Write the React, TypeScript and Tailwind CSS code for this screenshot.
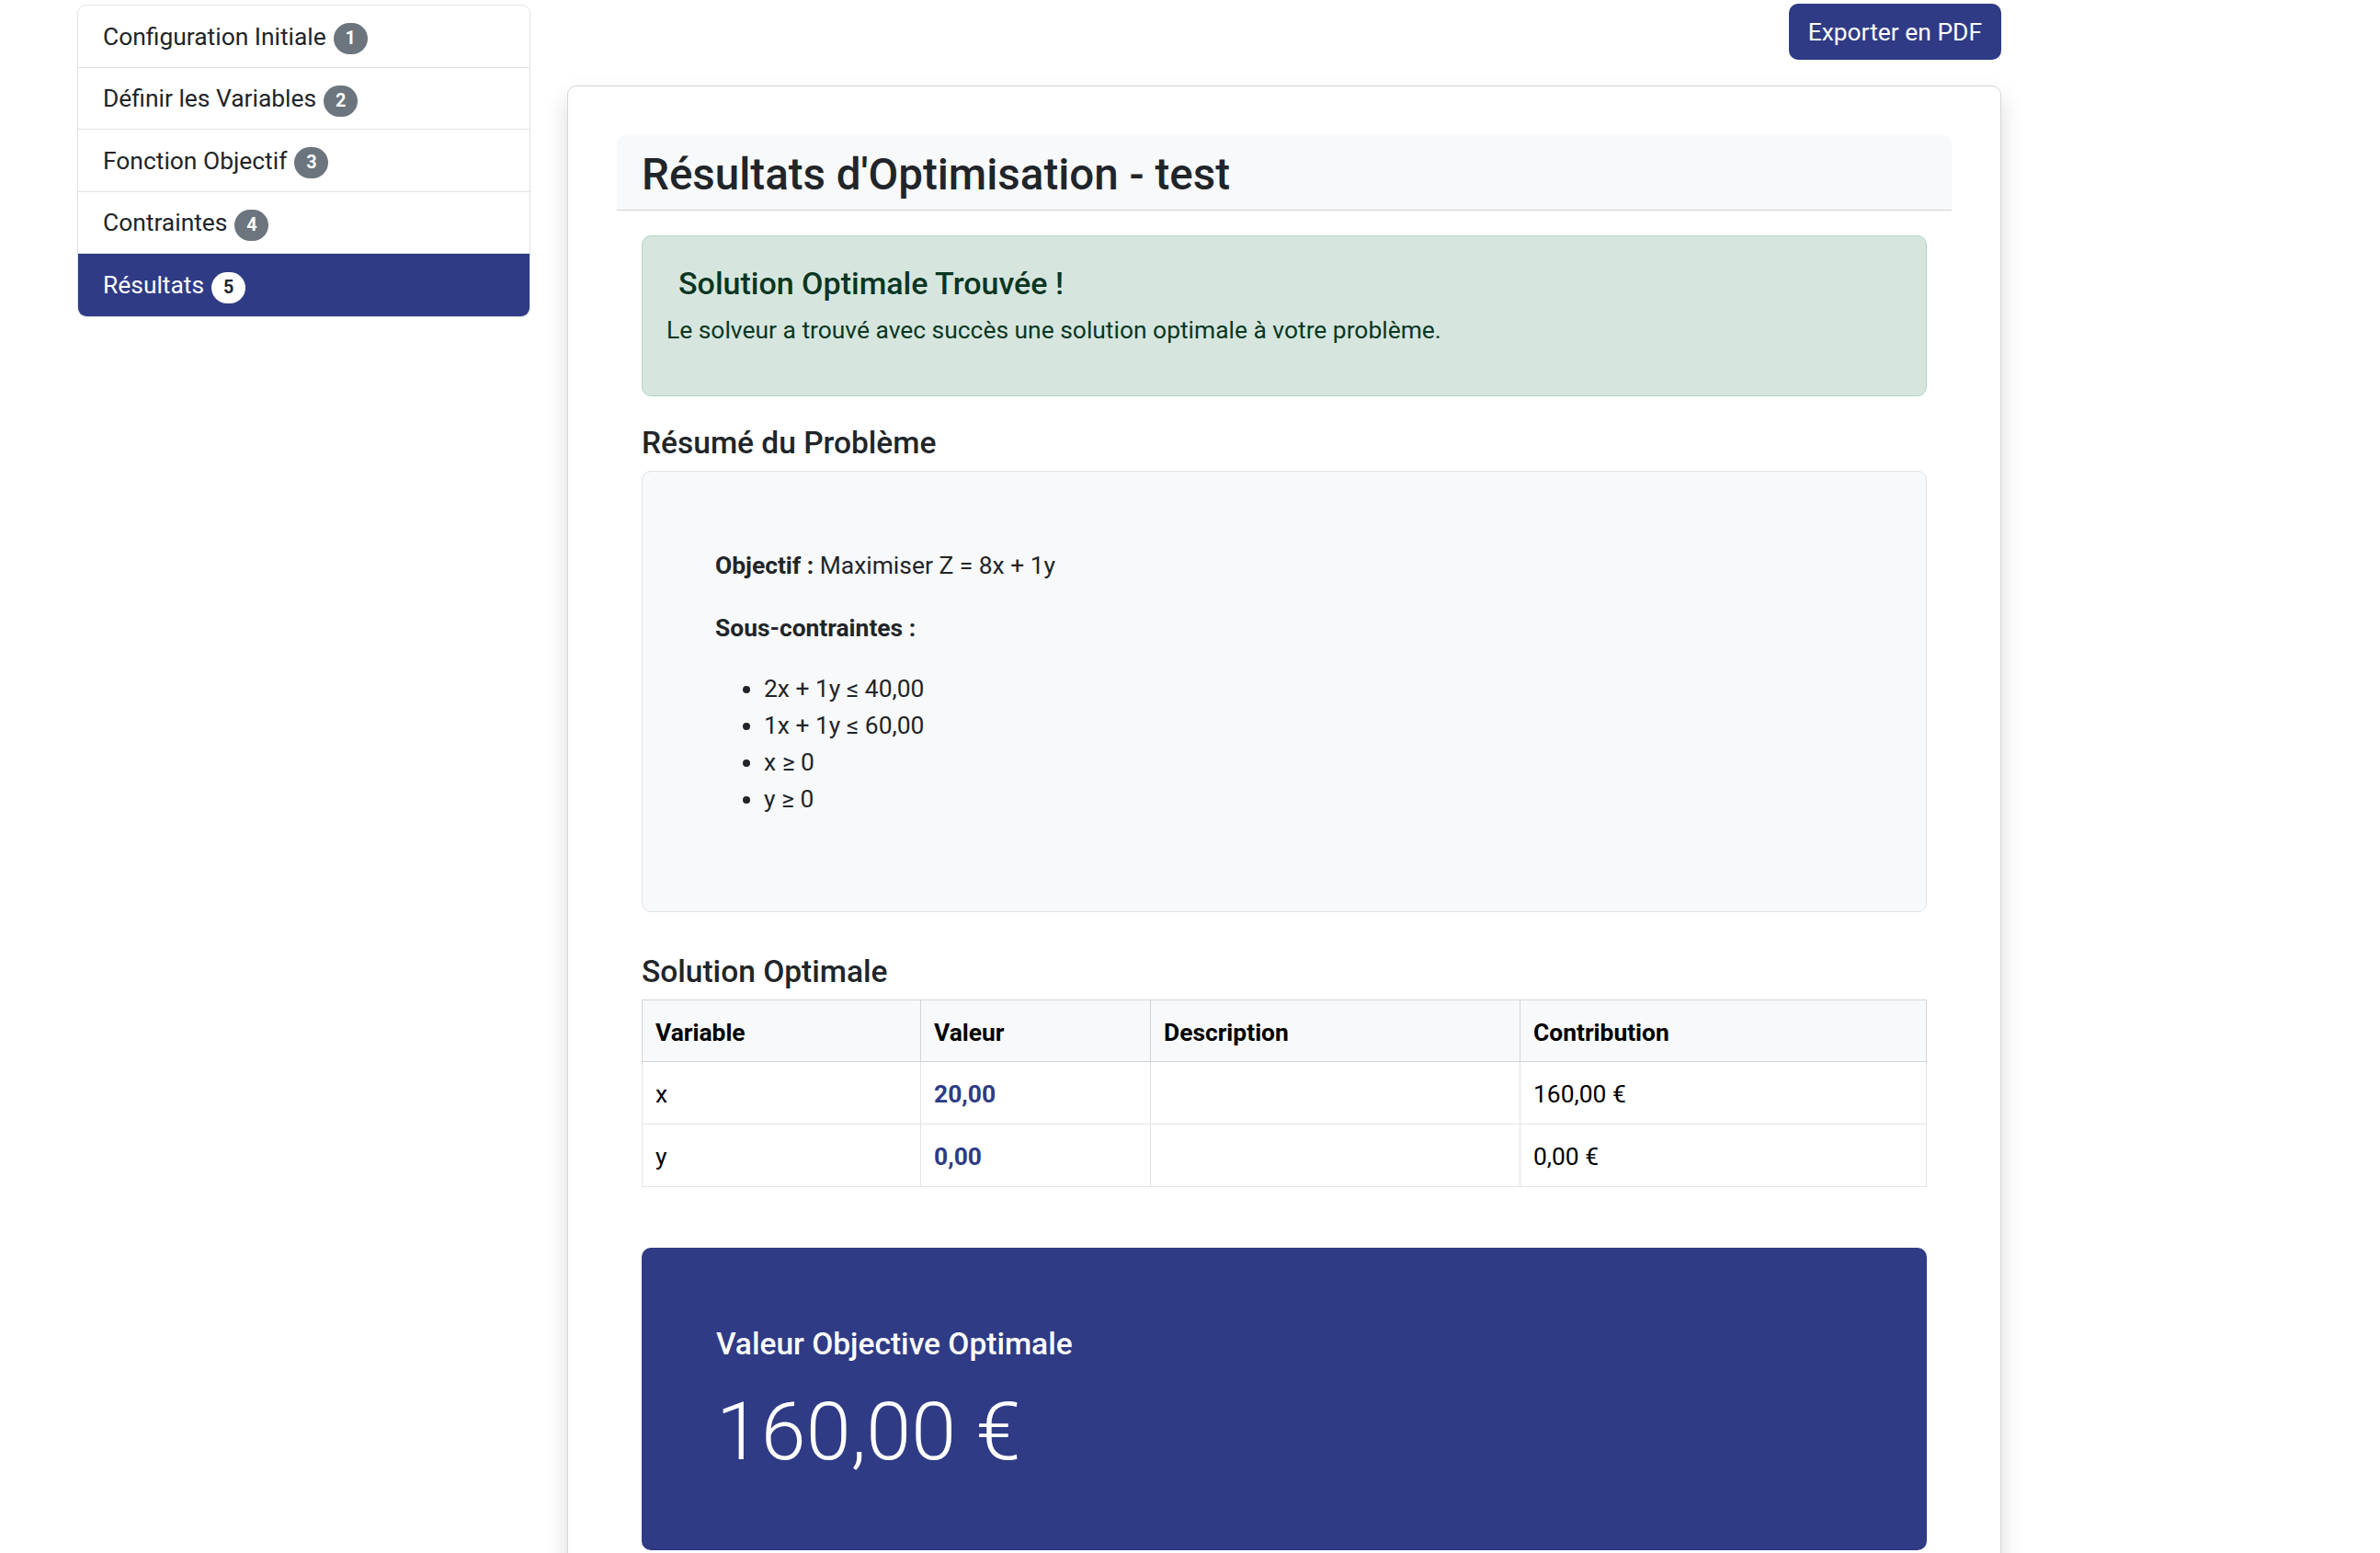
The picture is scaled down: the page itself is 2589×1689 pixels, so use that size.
import React from "react";

const steps = [
  { label: "Configuration Initiale", n: 1 },
  { label: "Définir les Variables", n: 2 },
  { label: "Fonction Objectif", n: 3 },
  { label: "Contraintes", n: 4 },
  { label: "Résultats", n: 5, active: true },
];

const constraints = ["2x + 1y ≤ 40,00", "1x + 1y ≤ 60,00", "x ≥ 0", "y ≥ 0"];

const rows = [
  { name: "x", value: "20,00", contrib: "160,00 €" },
  { name: "y", value: "0,00", contrib: "0,00 €" },
];

function Sidebar() {
  return (
    <aside className="mt-[5px] w-[493px] shrink-0 overflow-hidden rounded-[10px] border border-[#dee2e6]">
      {steps.map((s, i) => (
        <div
          key={s.label}
          className={`flex h-[67.5px] items-center px-[27px] pt-[3px] text-[26.4px] ${
            s.active ? "bg-[#2f3b85] text-white" : "bg-white text-[#212529]"
          } ${i < steps.length - 1 ? "border-b border-[#dee2e6]" : ""}`}
        >
          <span>{s.label}</span>
          <span
            className={`ml-[8px] mt-[3px] flex h-[34px] min-w-[37px] items-center justify-center rounded-full px-[10px] text-[19.8px] font-bold leading-none ${
              s.active ? "bg-white text-[#212529]" : "bg-[#6c757d] text-white"
            }`}
          >
            {s.n}
          </span>
        </div>
      ))}
    </aside>
  );
}

function ResultsCard() {
  return (
    <div className="mt-[28px] rounded-[10px] border border-[#d6d6d6] bg-white px-[53px] pt-[53px] pb-[60px] shadow-[0_13px_26px_rgba(0,0,0,0.15)]">
      {/* header */}
      <div className="rounded-t-[10px] border-b border-[#d0d1d2] bg-[#f8f9fa] px-[27px] pt-[13px] pb-[7px]">
        <h2 className="text-[47.5px] font-medium leading-[61px] text-[#212529]">
          Résultats d'Optimisation - test
        </h2>
      </div>

      <div className="px-[27px] pt-[27px]">
        {/* success alert */}
        <div className="h-[175px] rounded-[10px] border border-[#b3d5c4] bg-[#d6e6de] px-[26px] pt-[31px] text-[#0a3622]">
          <h4 className="mb-[11px] pl-[13px] text-[34px] font-medium leading-[40px]">
            Solution Optimale Trouvée !
          </h4>
          <p className="text-[26.4px] leading-[40px]">
            Le solveur a trouvé avec succès une solution optimale à votre problème.
          </p>
        </div>

        {/* summary */}
        <h5 className="mt-[31px] mb-[10px] text-[33.5px] font-medium leading-[40px] text-[#212529]">
          Résumé du Problème
        </h5>
        <div className="h-[480px] rounded-[10px] border border-[#dee2e6] bg-[#f8f9fa] px-[79px] pt-[82px] text-[26.4px] leading-[40px] text-[#212529]">
          <p className="mb-[28px]">
            <strong className="font-bold">Objectif :</strong> Maximiser Z = 8x + 1y
          </p>
          <p className="mb-[26px]">
            <strong className="font-bold">Sous-contraintes :</strong>
          </p>
          <ul className="list-disc pl-[53px]">
            {constraints.map((c) => (
              <li key={c}>{c}</li>
            ))}
          </ul>
        </div>

        {/* solution table */}
        <h5 className="mt-[45px] mb-[10px] text-[33.5px] font-medium leading-[40px] text-[#212529]">
          Solution Optimale
        </h5>
        <table className="w-full border-collapse text-[26.4px] text-[#212529]">
          <thead>
            <tr className="h-[67px] bg-[#f8f9fa]">
              <th className="w-[303px] border border-[#d3d4d5] px-[14px] pt-[5px] text-left font-bold text-black">Variable</th>
              <th className="w-[250px] border border-[#d3d4d5] px-[14px] pt-[5px] text-left font-bold text-black">Valeur</th>
              <th className="w-[402px] border border-[#d3d4d5] px-[14px] pt-[5px] text-left font-bold text-black">Description</th>
              <th className="border border-[#d3d4d5] px-[14px] pt-[5px] text-left font-bold text-black">Contribution</th>
            </tr>
          </thead>
          <tbody>
            {rows.map((r) => (
              <tr key={r.name} className="h-[68px]">
                <td className="border border-[#e2e3e5] px-[14px] pt-[5px] text-black">{r.name}</td>
                <td className="border border-[#e2e3e5] px-[14px] pt-[5px] font-bold text-[#2f3b85]">{r.value}</td>
                <td className="border border-[#e2e3e5] px-[14px] pt-[5px]"></td>
                <td className="border border-[#e2e3e5] px-[14px] pt-[5px] text-black">{r.contrib}</td>
              </tr>
            ))}
          </tbody>
        </table>

        {/* objective value */}
        <div className="mt-[66px] rounded-[10px] bg-[#2f3b85] px-[81px] pt-[85px] pb-[74px] text-white">
          <h5 className="mb-[20px] text-[33.5px] font-medium leading-[40px]">Valeur Objective Optimale</h5>
          <p className="text-[88px] font-light leading-[110px]">160,00 €</p>
        </div>
      </div>
    </div>
  );
}

export default function App() {
  return (
    <div
      className="h-[1689px] w-[2589px] overflow-hidden bg-white"
      style={{ fontFamily: "Roboto, 'Liberation Sans', sans-serif" }}
    >
      <div className="flex items-start pl-[84px]">
        <Sidebar />
        <main className="ml-[40px] w-[1560px] pt-[4px]">
          <div className="flex justify-end">
            <button className="h-[61px] rounded-[10px] bg-[#2f3b85] px-[21px] pt-[3px] text-[26.4px] text-white">
              Exporter en PDF
            </button>
          </div>
          <ResultsCard />
        </main>
      </div>
    </div>
  );
}
